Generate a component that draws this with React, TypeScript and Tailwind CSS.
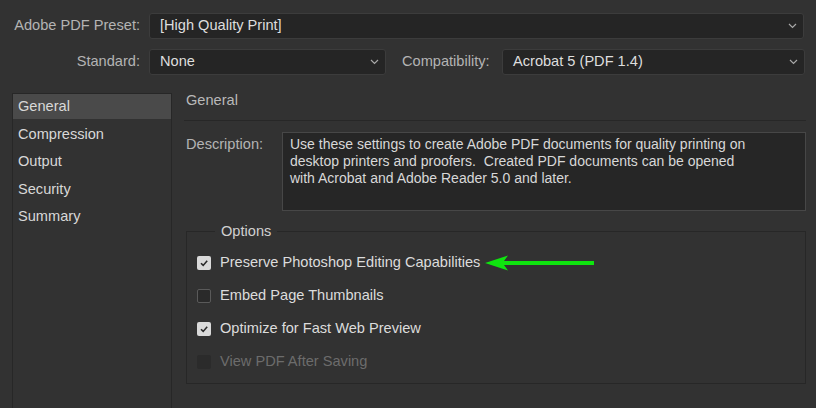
import React from 'react';

const Chevron: React.FC = () => (
  <svg width="9" height="6" viewBox="0 0 9 6" className="shrink-0">
    <polyline points="1,1 4.5,4.5 8,1" fill="none" stroke="#a8a8a8" strokeWidth="1.2" />
  </svg>
);

const Select: React.FC<{ value: string; className: string }> = ({ value, className }) => (
  <div
    className={`flex h-[26px] items-center justify-between rounded-[3px] border border-[#3c3c3c] bg-[#252525] pl-[10px] pr-[6px] text-[#dedede] ${className}`}
  >
    <span>{value}</span>
    <Chevron />
  </div>
);

const CheckBox: React.FC<{ checked?: boolean; disabled?: boolean }> = ({ checked, disabled }) => {
  if (disabled) return <div className="h-[14px] w-[14px] shrink-0 rounded-[2px] bg-[#2b2b2b]" />;
  if (!checked) return <div className="h-[14px] w-[14px] shrink-0 rounded-[2px] border border-[#5a5a5a] bg-[#2a2a2a]" />;
  return (
    <div className="flex h-[14px] w-[14px] shrink-0 items-center justify-center rounded-[2px] bg-[#dadada]">
      <svg width="10" height="10" viewBox="0 0 10 10">
        <polyline points="2,5.2 4.2,7.4 8.2,2.8" fill="none" stroke="#2a2a2a" strokeWidth="1.6" />
      </svg>
    </div>
  );
};

const options = [
  { label: 'Preserve Photoshop Editing Capabilities', checked: true, arrow: true },
  { label: 'Embed Page Thumbnails', checked: false },
  { label: 'Optimize for Fast Web Preview', checked: true },
  { label: 'View PDF After Saving', checked: false, disabled: true },
];

const sections = ['Compression', 'Output', 'Security', 'Summary'];

export default function App() {
  return (
    <div
      className="h-[408px] w-[816px] overflow-hidden bg-[#323232] text-[14.6px] text-[#dedede]"
      style={{ fontFamily: '"Liberation Sans", Arial, sans-serif' }}
    >
      {/* preset */}
      <div className="flex items-center pt-[13px]">
        <div className="w-[140px] text-right text-[#b4b4b4]">Adobe PDF Preset:</div>
        <Select value="[High Quality Print]" className="ml-[9px] w-[655px]" />
      </div>

      {/* standard / compatibility */}
      <div className="mt-[10px] flex items-center">
        <div className="w-[140px] text-right text-[#b4b4b4]">Standard:</div>
        <Select value="None" className="ml-[9px] w-[237px]" />
        <div className="ml-[16px] w-[91px] whitespace-nowrap text-[#b4b4b4]">Compatibility:</div>
        <Select value="Acrobat 5 (PDF 1.4)" className="ml-[9px] w-[303px]" />
      </div>

      <div className="mt-[18px] flex">
        {/* sidebar */}
        <div className="ml-[12px] h-[340px] w-[160px] border border-[#272727]">
          <div className="flex h-[25px] items-center bg-[#4a4a4a] pl-[5px] text-[#d8d8d8]">General</div>
          <div className="pt-[2px]">
            {sections.map((s) => (
              <div key={s} className="flex h-[27.4px] items-center pl-[5px] text-[#d8d8d8]">
                {s}
              </div>
            ))}
          </div>
        </div>

        {/* main panel */}
        <div className="ml-[12px] w-[622px]">
          <div className="-mt-[3px] h-[31px] border-b border-[#272727] pl-[2px] leading-[20px] text-[#b9b9b9]">General</div>

          <div className="mt-[11px] flex">
            <div className="w-[98px] pl-[2px] pt-[2px] text-[#b4b4b4]">Description:</div>
            <div className="h-[79px] w-[524px] border border-[#474747] bg-[#262626] px-[7px] pt-[3px] text-[14px] leading-[17px] text-[#d8d8d8]">
              Use these settings to create Adobe PDF documents for quality printing on
              <br />
              desktop printers and proofers.&nbsp; Created PDF documents can be opened
              <br />
              with Acrobat and Adobe Reader 5.0 and later.
            </div>
          </div>

          <fieldset className="ml-[2px] mt-[10px] w-[620px] border border-[#272727] pb-[5px] pl-[10px]">
            <legend className="ml-[18px] px-[6px] leading-[20px] text-[#d0d0d0]">Options</legend>
            <div className="pt-[5px]">
              {options.map((o) => (
                <div key={o.label} className="flex h-[33px] items-center">
                  <CheckBox checked={o.checked} disabled={o.disabled} />
                  <span className={`ml-[9px] ${o.disabled ? 'text-[#6c6c6c]' : 'text-[#dcdcdc]'}`}>{o.label}</span>
                  {o.arrow && (
                    <svg width="112" height="18" viewBox="0 0 112 18" className="ml-[5px]">
                      <polygon points="0,9 23,1.5 19,7 109,7 109,11 19,11 23,16.5" fill="#0fe40f" />
                    </svg>
                  )}
                </div>
              ))}
            </div>
          </fieldset>
        </div>
      </div>
    </div>
  );
}
